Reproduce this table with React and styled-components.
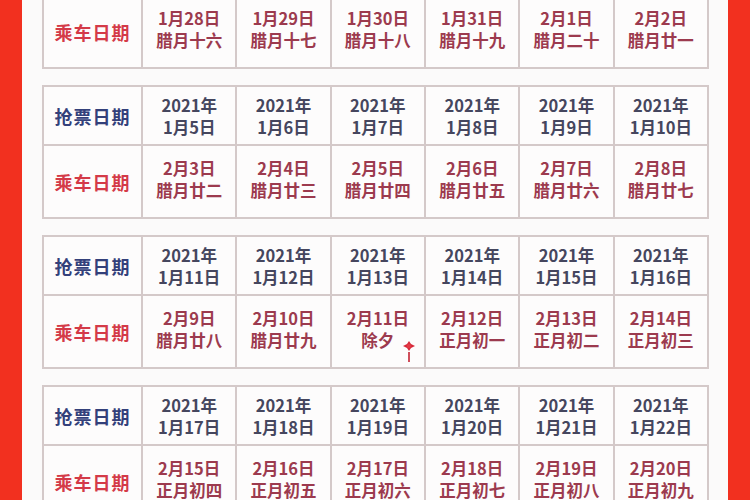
import React from 'react';
import styled, { createGlobalStyle } from 'styled-components';

const GlobalStyle = createGlobalStyle`
  html, body {
    margin: 0;
    padding: 0;
    background: #fbfafa;
  }
  #root {
    height: 500px;
    overflow: hidden;
  }
`;

// first block is scrolled past: only its travel row is still on screen
const blocks = [
  {
    tickets: null,
    travel: ['1月28日|腊月十六', '1月29日|腊月十七', '1月30日|腊月十八', '1月31日|腊月十九', '2月1日|腊月二十', '2月2日|腊月廿一'],
  },
  {
    tickets: ['2021年|1月5日', '2021年|1月6日', '2021年|1月7日', '2021年|1月8日', '2021年|1月9日', '2021年|1月10日'],
    travel: ['2月3日|腊月廿二', '2月4日|腊月廿三', '2月5日|腊月廿四', '2月6日|腊月廿五', '2月7日|腊月廿六', '2月8日|腊月廿七'],
  },
  {
    tickets: ['2021年|1月11日', '2021年|1月12日', '2021年|1月13日', '2021年|1月14日', '2021年|1月15日', '2021年|1月16日'],
    travel: ['2月9日|腊月廿八', '2月10日|腊月廿九', '2月11日|除夕', '2月12日|正月初一', '2月13日|正月初二', '2月14日|正月初三'],
  },
  {
    tickets: ['2021年|1月17日', '2021年|1月18日', '2021年|1月19日', '2021年|1月20日', '2021年|1月21日', '2021年|1月22日'],
    travel: ['2月15日|正月初四', '2月16日|正月初五', '2月17日|正月初六', '2月18日|正月初七', '2月19日|正月初八', '2月20日|正月初九'],
  },
];

function Lantern() {
  return (
    <Ornament width="14" height="26" viewBox="0 0 14 26">
      <path d="M7 1 L9 4 L13 6 L9 8 L7 11 L5 8 L1 6 L5 4 Z" fill="#d6293a" />
      <circle cx="7" cy="6" r="2.2" fill="#e33a45" />
      <rect x="6.2" y="12" width="1.6" height="10" fill="#c42434" />
    </Ornament>
  );
}

export default function App() {
  return (
    <>
      <GlobalStyle />
      <Page>
        <SideBar />
        <Content>
          {blocks.map((block, i) => (
            <Table key={i} partial={!block.tickets}>
              {block.tickets && <LabelCell kind="ticket">抢票日期</LabelCell>}
              {block.tickets &&
                block.tickets.map((t) => {
                  const [a, b] = t.split('|');
                  return (
                    <Cell key={t} kind="ticket">
                      <Line>{a}</Line>
                      <Line>{b}</Line>
                    </Cell>
                  );
                })}
              <LabelCell kind="travel">乘车日期</LabelCell>
              {block.travel.map((t) => {
                const [a, b] = t.split('|');
                return (
                  <Cell key={t} kind="travel">
                    <Line>{a}</Line>
                    <Line>{b}</Line>
                    {b === '除夕' && <Lantern />}
                  </Cell>
                );
              })}
            </Table>
          ))}
        </Content>
        <SideBar />
      </Page>
    </>
  );
}

const Page = styled.div`
  display: flex;
  width: 750px;
  height: 500px;
  overflow: hidden;
  font-family: "Noto Sans CJK SC", "Noto Sans", sans-serif;
`;

const SideBar = styled.div`
  flex: 0 0 22px;
  background: #f2301f;
`;

const Content = styled.div`
  flex: 1;
  display: flex;
  flex-direction: column;
  gap: 16px;
  padding: 0 19px 0 20px;
  margin-top: -6px;
  background: #fbfafa;
`;

const Table = styled.div.withConfig({
  shouldForwardProp: (prop) => prop !== 'partial',
})`
  display: grid;
  grid-template-columns: 99px repeat(6, 1fr);
  grid-template-rows: ${(p) => (p.partial ? '73px' : '59px 73px')};
  border-top: 2px solid #d4c9c9;
  border-left: 2px solid #d4c9c9;
  background: #fdfcfc;
  flex-shrink: 0;
`;

const Cell = styled.div`
  position: relative;
  display: flex;
  flex-direction: column;
  align-items: center;
  justify-content: center;
  padding-bottom: ${(p) => (p.kind === 'travel' ? '5px' : '0')};
  border-right: 2px solid #d4c9c9;
  border-bottom: 2px solid #d4c9c9;
  font-size: 16.5px;
  font-weight: 700;
  line-height: 22px;
  color: ${(p) => (p.kind === 'ticket' ? '#45465e' : '#9c3a4e')};
`;

const LabelCell = styled(Cell)`
  padding-bottom: 0;
  font-size: 18px;
  letter-spacing: 1px;
  color: ${(p) => (p.kind === 'ticket' ? '#33407a' : '#d43a48')};
`;

const Line = styled.span`
  white-space: nowrap;
`;

const Ornament = styled.svg`
  position: absolute;
  left: 70px;
  top: 44px;
`;
